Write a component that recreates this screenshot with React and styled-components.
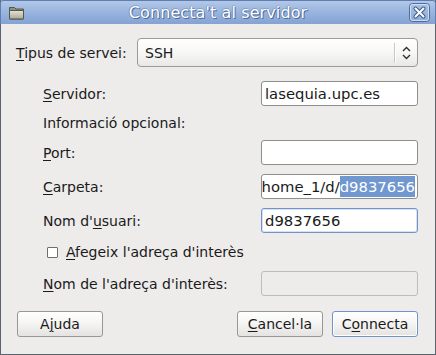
import React from 'react';
import styled, { createGlobalStyle, css } from 'styled-components';

const GlobalStyle = createGlobalStyle`
  html, body {
    margin: 0;
    padding: 0;
    background: #ffffff;
  }
  body {
    font-family: "DejaVu Sans", "Liberation Sans", sans-serif;
    font-size: 14px;
    color: #1a1a1a;
  }
`;

const Window = styled.div`
  width: 436px;
  height: 355px;
  box-sizing: border-box;
  display: flex;
  flex-direction: column;
  border: 1px solid #5c6470;
  border-top: none;
  background: #edeceb;
`;

const TitleBar = styled.div`
  height: 24px;
  margin: 0 -1px;
  display: flex;
  align-items: center;
  padding: 0 5px 0 7px;
  box-sizing: border-box;
  border: 1px solid #5f7db0;
  border-bottom: none;
  border-radius: 3px 3px 0 0;
  background: linear-gradient(to bottom, #b3c8e8 0%, #9ab5df 45%, #84a3d3 100%);
`;

const Title = styled.div`
  flex: 1;
  text-align: center;
  font-size: 16px;
  color: #ffffff;
  letter-spacing: 0.1px;
  text-shadow: 1px 1px 0 #4d6a98, -1px 0 0 rgba(77, 106, 152, 0.45), 0 -1px 0 rgba(77, 106, 152, 0.35);
  padding-left: 2px;
`;

const Body = styled.div`
  flex: 1;
  display: flex;
  flex-direction: column;
  padding: 14px 17px 0 15px;
`;

const TypeRow = styled.div`
  display: flex;
  align-items: center;
  height: 29px;
`;

const Label = styled.span`
  flex: 1;
  white-space: nowrap;
  align-self: center;
`;

const Key = styled.span`
  text-decoration: underline;
  text-underline-offset: 2px;
  text-decoration-thickness: 1px;
`;

const Combo = styled.div`
  width: 281px;
  height: 29px;
  box-sizing: border-box;
  display: flex;
  align-items: center;
  border: 1px solid #9a9a99;
  border-radius: 4px;
  background: linear-gradient(to bottom, #ffffff 0%, #f7f7f6 50%, #e9e8e7 100%);
  padding-left: 7px;
`;

const ComboText = styled.span`
  flex: 1;
`;

const ComboSep = styled.div`
  width: 1px;
  height: 20px;
  background: #c9c8c7;
  box-shadow: 1px 0 0 #ffffff;
`;

const ComboArrow = styled.div`
  width: 22px;
  display: flex;
  justify-content: center;
  align-items: center;
`;

const Form = styled.div`
  display: grid;
  grid-template-columns: 1fr 157px;
  grid-template-rows: 25px 16px 25px 25px 25px 20px 25px;
  row-gap: 9px;
  margin-top: 14px;
  padding-left: 27px;
`;

const Entry = styled.div`
  box-sizing: border-box;
  height: 25px;
  display: flex;
  align-items: center;
  overflow: hidden;
  white-space: nowrap;
  font-size: 14.8px;
  border: 1px solid #8e8e8d;
  border-radius: 3px;
  background: #ffffff;
  padding: 0 3px 0 3px;
  ${p => p.$focused && css`
    border-color: #7093c9;
    box-shadow: inset 0 0 0 1px #d6e2f3;
  `}
  ${p => p.$disabled && css`
    border-color: #bdbcbb;
    background: #edeceb;
  `}
  ${p => p.$scrolled && css`
    justify-content: flex-end;
    padding-right: 2px;
  `}
`;

const Selected = styled.span`
  background: #7097cf;
  color: #ffffff;
  line-height: 21px;
`;

const Wide = styled.div`
  grid-column: 1 / span 2;
  display: flex;
  align-items: center;
`;

const CheckRow = styled(Wide)`
  padding-left: 4px;
  gap: 8px;
`;

const CheckBox = styled.span`
  width: 11px;
  height: 11px;
  box-sizing: border-box;
  border: 1px solid #6f6f6e;
  background: #ffffff;
  border-radius: 1px;
`;

const Buttons = styled.div`
  display: flex;
  gap: 9px;
  margin-top: 15px;
  padding-left: 1px;
`;

const Spacer = styled.div`
  flex: 1;
`;

const Button = styled.button`
  width: 86px;
  height: 26px;
  box-sizing: border-box;
  font: inherit;
  color: #1a1a1a;
  border: 1px solid #979796;
  border-radius: 3px;
  background: linear-gradient(to bottom, #ffffff 0%, #f5f5f4 45%, #e4e3e2 100%);
  padding: 0;
  ${p => p.$focused && css`
    border-color: #7093c9;
    box-shadow: inset 0 0 0 1px #ffffff;
  `}
`;

const FolderIcon = () => (
  <svg width="17" height="17" viewBox="0 0 17 17">
    <defs>
      <linearGradient id="fold" x1="0" y1="0" x2="0" y2="1">
        <stop offset="0" stopColor="#e4e3d6" />
        <stop offset="1" stopColor="#a9a898" />
      </linearGradient>
    </defs>
    <path d="M1.5 3.5 h5 l1.5 1.5 h7.5 v10 h-14 z" fill="#8e8d7e" stroke="#555548" />
    <rect x="1.5" y="6.5" width="14" height="8.5" rx="0.5" fill="url(#fold)" stroke="#555548" />
  </svg>
);

const CloseIcon = () => (
  <svg width="21" height="19" viewBox="0 0 21 19">
    <rect x="0.5" y="0.5" width="20" height="18" rx="3" fill="rgba(160,185,225,0.35)" stroke="#4f6c9c" />
    <rect x="1.5" y="1.5" width="18" height="16" rx="2" fill="none" stroke="rgba(230,238,250,0.7)" />
    <path d="M6.5 5.5 L14.5 13.5 M14.5 5.5 L6.5 13.5" stroke="#3d5a8a" strokeWidth="4" strokeLinecap="round" />
    <path d="M6.5 5.5 L14.5 13.5 M14.5 5.5 L6.5 13.5" stroke="#ffffff" strokeWidth="2" strokeLinecap="round" />
  </svg>
);

const UpDownArrow = () => (
  <svg width="9" height="14" viewBox="0 0 9 14">
    <path d="M1 5 L4.5 1.5 L8 5 M1 9 L4.5 12.5 L8 9" fill="none" stroke="#2e2e2e" strokeWidth="1.4" />
  </svg>
);

export default function App() {
  return (
    <>
      <GlobalStyle />
      <Window>
        <TitleBar>
          <FolderIcon />
          <Title>Connecta't al servidor</Title>
          <CloseIcon />
        </TitleBar>
        <Body>
          <TypeRow>
            <Label><Key>T</Key>ipus de servei:</Label>
            <Combo>
              <ComboText>SSH</ComboText>
              <ComboSep />
              <ComboArrow><UpDownArrow /></ComboArrow>
            </Combo>
          </TypeRow>
          <Form>
            <Label><Key>S</Key>ervidor:</Label>
            <Entry>lasequia.upc.es</Entry>
            <Wide>Informació opcional:</Wide>
            <Label><Key>P</Key>ort:</Label>
            <Entry />
            <Label><Key>C</Key>arpeta:</Label>
            <Entry $scrolled>
              /home/home_1/d/<Selected>d9837656</Selected>
            </Entry>
            <Label>Nom d'<Key>u</Key>suari:</Label>
            <Entry $focused>d9837656</Entry>
            <CheckRow>
              <CheckBox />
              <span><Key>A</Key>fegeix l'adreça d'interès</span>
            </CheckRow>
            <Label><Key>N</Key>om de l'adreça d'interès:</Label>
            <Entry $disabled />
          </Form>
          <Buttons>
            <Button>A<Key>j</Key>uda</Button>
            <Spacer />
            <Button><Key>C</Key>ancel·la</Button>
            <Button $focused>C<Key>o</Key>nnecta</Button>
          </Buttons>
        </Body>
      </Window>
    </>
  );
}
